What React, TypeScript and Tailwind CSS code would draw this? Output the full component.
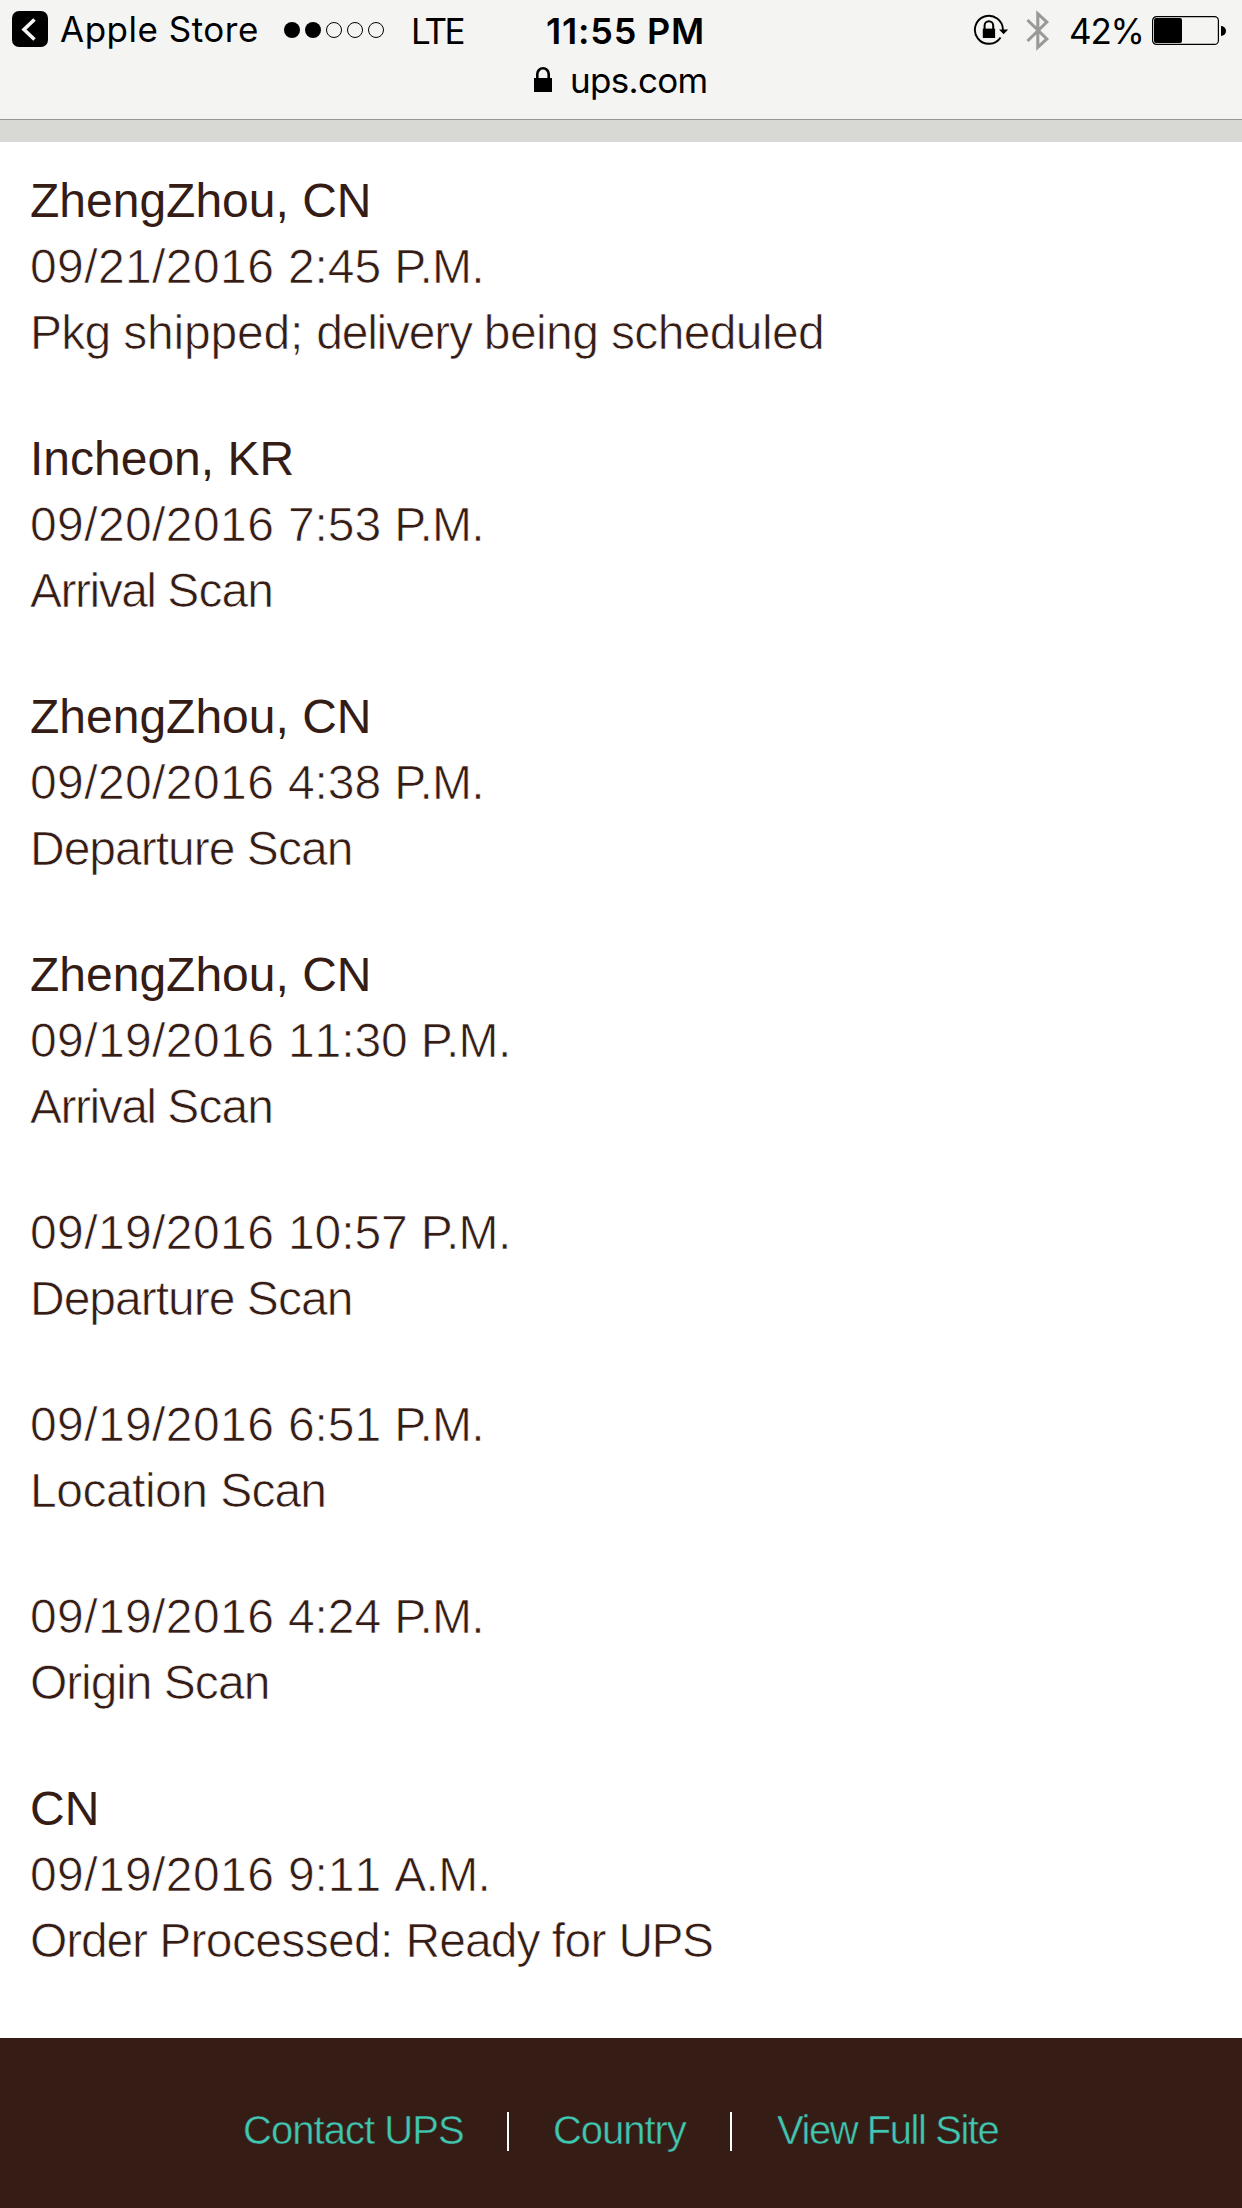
import React from "react";

const scans = [
  {
    place: "ZhengZhou, CN",
    date: "09/21/2016 2:45 P.M.",
    status: "Pkg shipped; delivery being scheduled",
  },
  { place: "Incheon, KR", date: "09/20/2016 7:53 P.M.", status: "Arrival Scan" },
  { place: "ZhengZhou, CN", date: "09/20/2016 4:38 P.M.", status: "Departure Scan" },
  { place: "ZhengZhou, CN", date: "09/19/2016 11:30 P.M.", status: "Arrival Scan" },
  { date: "09/19/2016 10:57 P.M.", status: "Departure Scan" },
  { date: "09/19/2016 6:51 P.M.", status: "Location Scan" },
  { date: "09/19/2016 4:24 P.M.", status: "Origin Scan" },
  {
    place: "CN",
    date: "09/19/2016 9:11 A.M.",
    status: "Order Processed: Ready for UPS",
  },
];

const tracking: Record<string, string> = {
  Pkg: "tracking-[-0.7px]",
  "shipped;": "tracking-[-0.2px]",
  delivery: "tracking-[-1.25px]",
  being: "tracking-[-0.6px]",
  scheduled: "tracking-[-0.65px]",
  Arrival: "tracking-[-1.5px]",
  Departure: "tracking-[-1px]",
  Location: "tracking-[-0.5px]",
  Origin: "tracking-[-1.1px]",
  Scan: "tracking-[-0.9px]",
  Order: "tracking-[-1.15px]",
  "Processed:": "tracking-[-0.65px]",
  Ready: "tracking-[-0.95px]",
  for: "tracking-[-0.7px]",
  UPS: "tracking-[-1.6px]",
};

function StatusBar() {
  return (
    <div className="flex h-[62px] items-start text-[35px] leading-[60px] whitespace-nowrap text-black">
      <svg className="mt-[11px] ml-3 h-9 w-9 shrink-0" viewBox="0 0 36 36">
        <rect width="36" height="36" rx="7" />
        <path d="M22.5 8.5 L12 18.5 L22.5 28.5" fill="none" stroke="#f4f4f3" strokeWidth="3.6" />
      </svg>
      <span className="ml-[12px] w-[224px] leading-[58px] tracking-[0.5px]">Apple Store</span>
      <svg className="mt-[22px] h-4 w-[101px] shrink-0" viewBox="0 0 101 16">
        <circle cx="8" cy="8" r="8" />
        <circle cx="29" cy="8" r="8" />
        <circle cx="50" cy="8" r="7.5" fill="none" stroke="black" />
        <circle cx="71" cy="8" r="7.5" fill="none" stroke="black" />
        <circle cx="92" cy="8" r="7.5" fill="none" stroke="black" />
      </svg>
      <span className="ml-[26px] w-[135px] pt-px tracking-[-2.8px]">LTE</span>
      <span className="w-[427px] pt-px text-[36px] font-semibold tracking-[0.8px]">11:55 PM</span>
      <svg className="mt-[14px] h-8 w-9 shrink-0" viewBox="0 0 36 32">
        <path
          d="M27.6 23.5 A14 14 0 1 1 29.9 16"
          fill="none"
          stroke="black"
          strokeWidth="1.9"
        />
        <path d="M26 15.4 H35.2 L30.6 20.2 Z" />
        <path d="M11.6 15 V11.6 a4.3 4.3 0 0 1 8.6 0 V15" fill="none" stroke="black" strokeWidth="2" />
        <rect x="9.8" y="14.6" width="12.3" height="9.4" />
      </svg>
      <svg className="mt-[10px] ml-[17px] h-[42px] w-6 shrink-0" viewBox="0 0 24 42">
        <path
          d="M1.5 10 L20.8 29 L11.8 37.3 V3.7 L20.8 12 L1.5 31"
          fill="none"
          stroke="#999"
          strokeWidth="3.1"
        />
      </svg>
      <span className="ml-[19px] w-[83px] pt-px tracking-[-1.2px]">42%</span>
      <svg className="mt-4 h-[29px] w-[74px] shrink-0" viewBox="0 0 74 29">
        <rect x="0.6" y="0.6" width="65.8" height="27.8" rx="4" fill="none" stroke="black" strokeWidth="1.2" />
        <rect x="2" y="2" width="28" height="25" rx="2" />
        <path d="M69 10 A5 5 0 0 1 69 20 Z" />
      </svg>
    </div>
  );
}

function AddressBar() {
  return (
    <div className="flex h-[57px] items-start text-[35px] leading-[37px] text-black">
      <svg className="mt-[5px] ml-[534px] h-[25px] w-[18px]" viewBox="0 0 18 25">
        <path d="M3.3 12 V7 a5.7 5.7 0 0 1 11.4 0 V12" fill="none" stroke="black" strokeWidth="2.6" />
        <rect y="11" width="18" height="14" />
      </svg>
      <span className="ml-[18px] tracking-[-0.7px]">ups.com</span>
    </div>
  );
}

function Scan({ place, date, status }: { place?: string; date: string; status: string }) {
  const [day, time, meridiem] = date.split(" ");
  return (
    <div className="whitespace-nowrap">
      {place && <h2>{place}</h2>}
      <p className="[-webkit-text-stroke:0.7px_white]">
        <span className="tracking-[0.4px]">{day} </span>
        <span className="tracking-[-0.1px] [font-kerning:none]">{time} </span>
        <span className="tracking-[-0.7px]">{meridiem}</span>
      </p>
      <p className="[-webkit-text-stroke:0.7px_white]">
        {status.split(" ").map((word) => (
          <span key={word} className={tracking[word]}>
            {word}{" "}
          </span>
        ))}
      </p>
    </div>
  );
}

function Footer() {
  return (
    <footer className="flex h-[170px] items-start bg-[#351c15] pt-[74px] pl-[243px] text-[40px] leading-[37px] whitespace-nowrap text-[#40c6b1] [-webkit-text-stroke:0.5px_#351c15]">
      <a className="w-[264px] tracking-[-0.95px]">Contact UPS</a>
      <span className="h-[39px] w-[2px] bg-white" />
      <a className="ml-[44px] w-[177px] tracking-[-1.05px]">Country</a>
      <span className="h-[39px] w-[2px] bg-white" />
      <a className="ml-[45px] tracking-[-1.45px]">View Full Site</a>
    </footer>
  );
}

function App() {
  return (
    <div className="h-[2208px] w-[1242px] overflow-hidden bg-white">
      <header className="h-[120px] border-b border-[#979797] bg-[#f4f4f3] font-['Inter',sans-serif]">
        <StatusBar />
        <AddressBar />
      </header>
      <div className="h-[22px] bg-[#d8d9d4]" />
      <div className="font-['Liberation_Sans',sans-serif]">
        <main className="flex h-[1896px] flex-col gap-[60px] pt-[26px] pl-[30px] text-[48px] leading-[66px] text-[#351c15]">
          {scans.map((scan) => (
            <Scan key={scan.date} {...scan} />
          ))}
        </main>
        <Footer />
      </div>
    </div>
  );
}

export default App;
